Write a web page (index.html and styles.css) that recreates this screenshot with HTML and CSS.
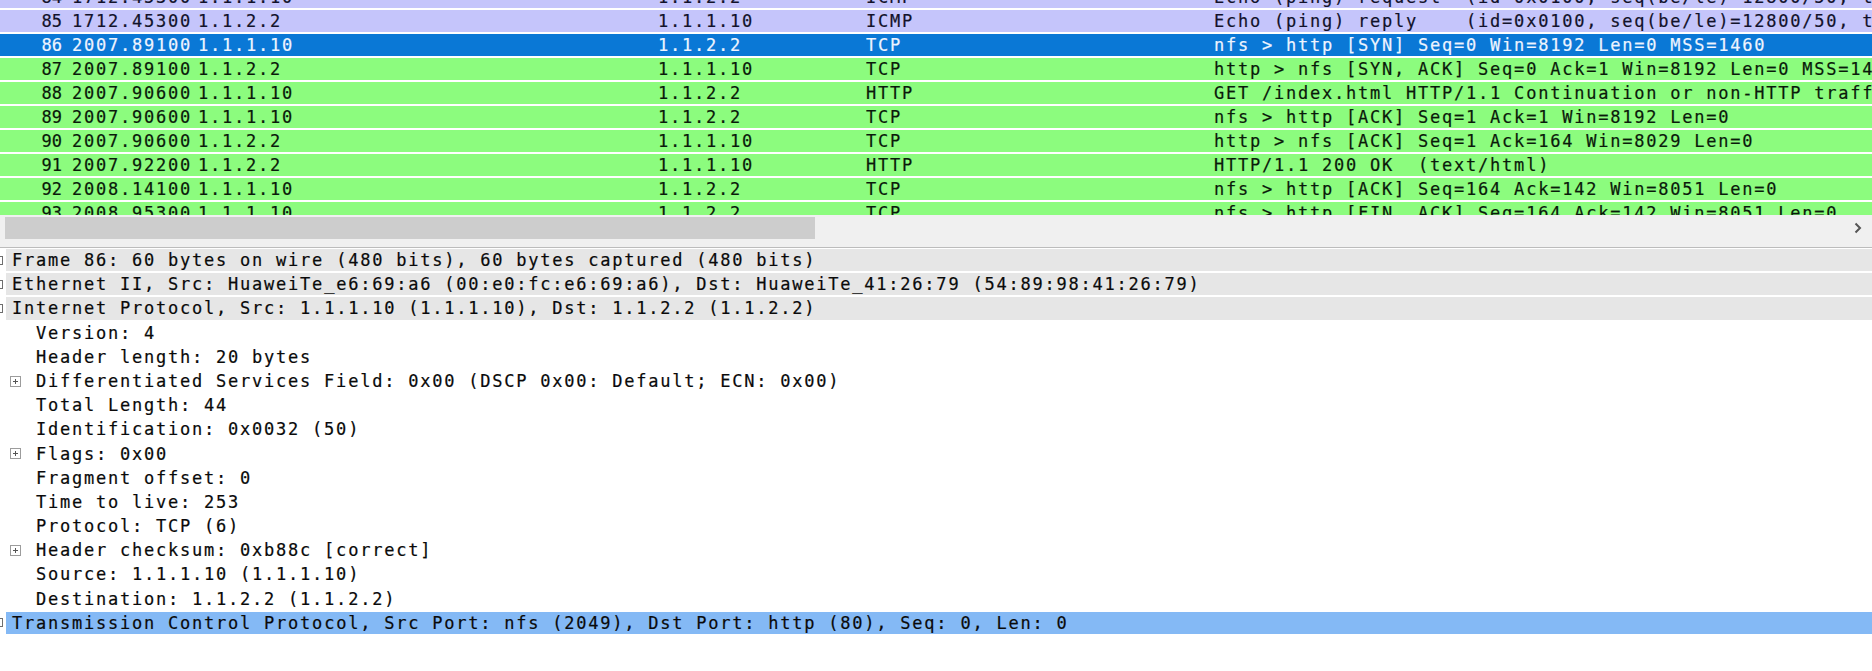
FILE: index.html
```html
<!DOCTYPE html>
<html>
<head>
<meta charset="utf-8">
<link rel="stylesheet" href="styles.css">
</head>
<body>
<div class="packets">
  <div class="packets-inner">
    <div class="prow icmp"><span class="no">84</span><span>1712.45300</span><span>1.1.1.10</span><span>1.1.2.2</span><span>ICMP</span><span>Echo (ping) request  (id=0x0100, seq(be/le)=12800/50, ttl=255)</span></div>
    <div class="prow icmp"><span class="no">85</span><span>1712.45300</span><span>1.1.2.2</span><span>1.1.1.10</span><span>ICMP</span><span>Echo (ping) reply    (id=0x0100, seq(be/le)=12800/50, ttl=255)</span></div>
    <div class="prow sel"><span class="no">86</span><span>2007.89100</span><span>1.1.1.10</span><span>1.1.2.2</span><span>TCP</span><span>nfs &gt; http [SYN] Seq=0 Win=8192 Len=0 MSS=1460</span></div>
    <div class="prow tcp"><span class="no">87</span><span>2007.89100</span><span>1.1.2.2</span><span>1.1.1.10</span><span>TCP</span><span>http &gt; nfs [SYN, ACK] Seq=0 Ack=1 Win=8192 Len=0 MSS=1460</span></div>
    <div class="prow tcp"><span class="no">88</span><span>2007.90600</span><span>1.1.1.10</span><span>1.1.2.2</span><span>HTTP</span><span>GET /index.html HTTP/1.1 Continuation or non-HTTP traffic</span></div>
    <div class="prow tcp"><span class="no">89</span><span>2007.90600</span><span>1.1.1.10</span><span>1.1.2.2</span><span>TCP</span><span>nfs &gt; http [ACK] Seq=1 Ack=1 Win=8192 Len=0</span></div>
    <div class="prow tcp"><span class="no">90</span><span>2007.90600</span><span>1.1.2.2</span><span>1.1.1.10</span><span>TCP</span><span>http &gt; nfs [ACK] Seq=1 Ack=164 Win=8029 Len=0</span></div>
    <div class="prow tcp"><span class="no">91</span><span>2007.92200</span><span>1.1.2.2</span><span>1.1.1.10</span><span>HTTP</span><span>HTTP/1.1 200 OK  (text/html)</span></div>
    <div class="prow tcp"><span class="no">92</span><span>2008.14100</span><span>1.1.1.10</span><span>1.1.2.2</span><span>TCP</span><span>nfs &gt; http [ACK] Seq=164 Ack=142 Win=8051 Len=0</span></div>
    <div class="prow tcp"><span class="no">93</span><span>2008.95300</span><span>1.1.1.10</span><span>1.1.2.2</span><span>TCP</span><span>nfs &gt; http [FIN, ACK] Seq=164 Ack=142 Win=8051 Len=0</span></div>
  </div>
</div>
<div class="hscroll">
  <div class="thumb"></div>
  <div class="arrow"><svg width="8" height="12" viewBox="0 0 8 12"><path d="M1.5 1.5 L6 6 L1.5 10.5" fill="none" stroke="#555" stroke-width="2"/></svg></div>
</div>
<div class="tree">
  <div class="node top"><span class="stub"></span><span class="label">Frame 86: 60 bytes on wire (480 bits), 60 bytes captured (480 bits)</span></div>
  <div class="node top"><span class="stub"></span><span class="label">Ethernet II, Src: HuaweiTe_e6:69:a6 (00:e0:fc:e6:69:a6), Dst: HuaweiTe_41:26:79 (54:89:98:41:26:79)</span></div>
  <div class="node top"><span class="stub"></span><span class="label">Internet Protocol, Src: 1.1.1.10 (1.1.1.10), Dst: 1.1.2.2 (1.1.2.2)</span></div>
  <div class="node child"><span class="nobox"></span><span>Version: 4</span></div>
  <div class="node child"><span class="nobox"></span><span>Header length: 20 bytes</span></div>
  <div class="node child"><svg class="box" width="11" height="11" viewBox="0 0 11 11"><rect x="0.5" y="0.5" width="10" height="10" fill="#fff" stroke="#9c9c9c"/><path d="M3 5.5 H8 M5.5 3 V8" stroke="#555" stroke-width="1"/></svg><span>Differentiated Services Field: 0x00 (DSCP 0x00: Default; ECN: 0x00)</span></div>
  <div class="node child"><span class="nobox"></span><span>Total Length: 44</span></div>
  <div class="node child"><span class="nobox"></span><span>Identification: 0x0032 (50)</span></div>
  <div class="node child"><svg class="box" width="11" height="11" viewBox="0 0 11 11"><rect x="0.5" y="0.5" width="10" height="10" fill="#fff" stroke="#9c9c9c"/><path d="M3 5.5 H8 M5.5 3 V8" stroke="#555" stroke-width="1"/></svg><span>Flags: 0x00</span></div>
  <div class="node child"><span class="nobox"></span><span>Fragment offset: 0</span></div>
  <div class="node child"><span class="nobox"></span><span>Time to live: 253</span></div>
  <div class="node child"><span class="nobox"></span><span>Protocol: TCP (6)</span></div>
  <div class="node child"><svg class="box" width="11" height="11" viewBox="0 0 11 11"><rect x="0.5" y="0.5" width="10" height="10" fill="#fff" stroke="#9c9c9c"/><path d="M3 5.5 H8 M5.5 3 V8" stroke="#555" stroke-width="1"/></svg><span>Header checksum: 0xb88c [correct]</span></div>
  <div class="node child"><span class="nobox"></span><span>Source: 1.1.1.10 (1.1.1.10)</span></div>
  <div class="node child"><span class="nobox"></span><span>Destination: 1.1.2.2 (1.1.2.2)</span></div>
  <div class="node top selected"><span class="stub"></span><span class="label">Transmission Control Protocol, Src Port: nfs (2049), Dst Port: http (80), Seq: 0, Len: 0</span></div>
</div>
</body>
</html>
```

FILE: styles.css
```css
html, body {
  margin: 0;
  padding: 0;
  background: #ffffff;
  overflow: hidden;
}

body {
  font-family: "DejaVu Sans Mono", "Liberation Mono", monospace;
  font-size: 17px;
  letter-spacing: 1.77px;
  color: #0a0a0a;
  -webkit-text-stroke: 0.2px currentColor;
  width: 1872px;
  height: 671px;
}

.packets {
  height: 215px;
  overflow: hidden;
}

.packets-inner {
  margin-top: -14px;
}

.prow {
  display: grid;
  grid-template-columns: 62px 136px 460px 208px 348px 1fr;
  height: 22px;
  line-height: 22px;
  margin-bottom: 2px;
  white-space: pre;
  overflow: hidden;
  color: #0a1a0a;
}

.prow > span {
  overflow: hidden;
}

.prow .no {
  text-align: right;
  letter-spacing: 0;
}

.prow > span:nth-child(2) {
  padding-left: 10px;
}

.icmp {
  background: #c5c5fb;
  color: #12122a;
}

.tcp {
  background: #8cfc7e;
}

.sel {
  background: #0a78d6;
  color: #eef4ff;
}

.hscroll {
  background: #f0f0f0;
  border-bottom: 1px solid #bcbcbc;
  display: flex;
  align-items: flex-start;
  padding-top: 2px;
  box-sizing: border-box;
  height: 33px;
}

.thumb {
  margin-left: 5px;
  width: 810px;
  height: 22px;
  background: #cdcdcd;
}

.arrow {
  margin-left: auto;
  margin-right: 10px;
  height: 22px;
  display: flex;
  align-items: center;
}

.tree {
  padding-top: 1px;
}

.node {
  display: flex;
  align-items: center;
  height: 22.2px;
  line-height: 22.2px;
  margin-bottom: 2px;
  white-space: pre;
}

.node.top .stub {
  flex: none;
  width: 9px;
  height: 9px;
  box-sizing: border-box;
  border: 1px solid #6e6e6e;
  margin-left: -6px;
  margin-right: 3px;
}

.node.top .label {
  flex: 1;
  height: 100%;
  padding-left: 6px;
  background: #e6e6e6;
}

.node.selected .label {
  background: #84b9f5;
}

.node.child {
  padding-left: 10px;
}

.node.child .box,
.node.child .nobox {
  flex: none;
  width: 11px;
  height: 11px;
  margin-right: 15px;
}
```
